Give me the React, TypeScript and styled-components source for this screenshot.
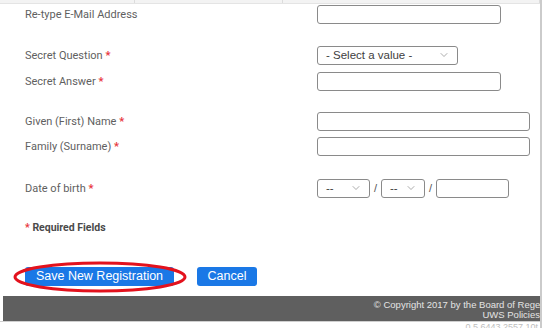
import styled, { createGlobalStyle } from 'styled-components';
import { ChevronDown } from 'lucide-react';

const GlobalStyle = createGlobalStyle`
  html, body {
    margin: 0;
    padding: 0;
    background: #ffffff;
  }
  body {
    font-family: Roboto, "Liberation Sans", Arial, sans-serif;
  }
`;

export default function App() {
  return (
    <>
      <GlobalStyle />
      <Page>
        <TopStrip>
          <StripCell $w={132} />
          <StripCell $w={148} />
          <StripCell $w={258} />
        </TopStrip>

        <Form>
          <Row $top={1}>
            <Label>Re-type E-Mail Address</Label>
            <TextInput $w={184} />
          </Row>

          <Row $top={22}>
            <Label>Secret Question <Star>*</Star></Label>
            <SelectBox $w={141}>
              <span>- Select a value -</span>
              <ChevronDown size={12} strokeWidth={1.1} color="#666" />
            </SelectBox>
          </Row>
          <Row $top={7}>
            <Label>Secret Answer <Star>*</Star></Label>
            <TextInput $w={184} />
          </Row>

          <Row $top={21}>
            <Label>Given (First) Name <Star>*</Star></Label>
            <TextInput $w={213} />
          </Row>
          <Row $top={6}>
            <Label>Family (Surname) <Star>*</Star></Label>
            <TextInput $w={213} />
          </Row>

          <Row $top={23}>
            <Label>Date of birth <Star>*</Star></Label>
            <DateGroup>
              <SelectBox $w={53}>
                <span>--</span>
                <ChevronDown size={12} strokeWidth={1.1} color="#666" />
              </SelectBox>
              <Slash>/</Slash>
              <SelectBox $w={44}>
                <span>--</span>
                <ChevronDown size={12} strokeWidth={1.1} color="#666" />
              </SelectBox>
              <Slash>/</Slash>
              <TextInput $w={73} />
            </DateGroup>
          </Row>

          <Row $top={20}>
            <Required><Star>*</Star> Required Fields</Required>
          </Row>

          <Buttons>
            <SaveWrap>
              <Button $w={149}>Save New Registration</Button>
              <Circle viewBox="0 0 174 32" preserveAspectRatio="none">
                <ellipse cx="87" cy="16" rx="85" ry="14" fill="none" stroke="#e3121d" strokeWidth="3" />
              </Circle>
            </SaveWrap>
            <Button $w={60}>Cancel</Button>
          </Buttons>
        </Form>

        <Footer>
          <FooterLine $shift={-13}>© Copyright 2017 by the Board of Regents</FooterLine>
          <FooterLine $shift={0}>UWS Policies</FooterLine>
        </Footer>
        <Version>0.5.6443.2557.10t</Version>
      </Page>
    </>
  );
}

const Page = styled.div`
  width: 540px;
  height: 328px;
  overflow: hidden;
  border-right: 2px solid #cbcbcb;
  box-sizing: content-box;
  position: relative;
  display: flex;
  flex-direction: column;
`;

const TopStrip = styled.div`
  height: 3px;
  display: flex;
  padding-left: 3px;
  background: #f3f3f3;
  border-bottom: 1px solid #e4e4e4;
`;

const StripCell = styled.div<{ $w: number }>`
  width: ${p => p.$w}px;
  border-right: 1px solid #dcdcdc;
`;

const Form = styled.div`
  display: flex;
  flex-direction: column;
  padding-left: 25px;
`;

const Row = styled.div<{ $top: number }>`
  display: flex;
  align-items: center;
  height: 19px;
  margin-top: ${p => p.$top}px;
`;

const Label = styled.div`
  width: 292px;
  font-size: 11px;
  color: #5f5f5f;
  white-space: nowrap;
`;

const Star = styled.span`
  color: #e8363c;
  font-weight: 700;
`;

const TextInput = styled.div<{ $w: number }>`
  width: ${p => p.$w}px;
  height: 19px;
  box-sizing: border-box;
  border: 1px solid #8a8a8a;
  border-radius: 3px;
  background: #fff;
`;

const SelectBox = styled.div<{ $w: number }>`
  width: ${p => p.$w}px;
  height: 19px;
  box-sizing: border-box;
  border: 1px solid #8a8a8a;
  border-radius: 3px;
  background: #fff;
  display: flex;
  align-items: center;
  justify-content: space-between;
  padding: 0 7px 0 8px;
  font-family: "Liberation Sans", Arial, sans-serif;
  font-size: 11.5px;
  color: #3e3e3e;
  white-space: nowrap;

  svg {
    flex: none;
  }
`;

const DateGroup = styled.div`
  display: flex;
  align-items: center;
`;

const Slash = styled.span`
  width: 11px;
  text-align: center;
  font-family: "Liberation Sans", Arial, sans-serif;
  font-size: 11px;
  color: #555;
`;

const Required = styled.div`
  font-size: 10.5px;
  font-weight: 700;
  color: #4a4a4a;
`;

const Buttons = styled.div`
  display: flex;
  gap: 23px;
  margin-top: 30px;
  height: 19px;
`;

const SaveWrap = styled.div`
  position: relative;
  display: flex;
`;

const Button = styled.div<{ $w: number }>`
  width: ${p => p.$w}px;
  height: 19px;
  border-radius: 3px;
  background: #1a78e6;
  color: #fff;
  font-family: "Liberation Sans", Arial, sans-serif;
  font-size: 12.5px;
  display: flex;
  align-items: center;
  justify-content: center;
  white-space: nowrap;
`;

const Circle = styled.svg`
  position: absolute;
  left: -12px;
  top: -6px;
  width: 174px;
  height: 32px;
  overflow: visible;
  pointer-events: none;
`;

const Footer = styled.div`
  margin: 10px 0 0 3px;
  height: 26px;
  padding-top: 2px;
  box-sizing: border-box;
  background: #5f5f5f;
  display: flex;
  flex-direction: column;
  align-items: flex-end;
  justify-content: center;
  font-family: "Liberation Sans", Arial, sans-serif;
  font-size: 9.5px;
  line-height: 10px;
  color: #e4e4e4;
  white-space: nowrap;
`;

const FooterLine = styled.div<{ $shift: number }>`
  margin-right: ${p => p.$shift}px;
`;

const Version = styled.div`
  height: 6px;
  overflow: hidden;
  text-align: right;
  font-family: "Liberation Sans", Arial, sans-serif;
  font-size: 9px;
  line-height: 11px;
  color: #bdbdbd;
  border-top: 1px solid #cfcfcf;
  padding-right: 2px;
`;
